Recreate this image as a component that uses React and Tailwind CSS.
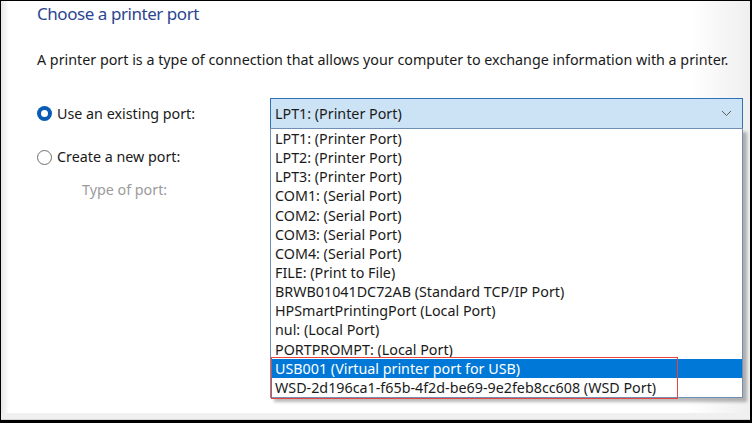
import React from "react";

const ports = [
  "LPT1: (Printer Port)",
  "LPT2: (Printer Port)",
  "LPT3: (Printer Port)",
  "COM1: (Serial Port)",
  "COM2: (Serial Port)",
  "COM3: (Serial Port)",
  "COM4: (Serial Port)",
  "FILE: (Print to File)",
  "BRWB01041DC72AB (Standard TCP/IP Port)",
  "HPSmartPrintingPort (Local Port)",
  "nul: (Local Port)",
  "PORTPROMPT: (Local Port)",
  "USB001 (Virtual printer port for USB)",
  "WSD-2d196ca1-f65b-4f2d-be69-9e2feb8cc608 (WSD Port)",
];

const font = { fontFamily: '"Noto Sans", "Open Sans", sans-serif' };

export default function App() {
  return (
    <div className="w-[752px] h-[423px] bg-black pt-px pl-px pr-[2px] pb-[3px]" style={font}>
      <div className="h-full flex flex-col bg-[linear-gradient(to_right,#e6e6e6,#ffffff_8px,#ffffff_calc(100%-60px),#efefef)]">
        <div className="flex-1 relative pl-[36px] text-[#1a1a1a]">
          <h1 className="pt-[1px] text-[17px] leading-[24px] tracking-[-0.45px] text-[#2d4591]">Choose a printer port</h1>
          <p className="mt-[24px] text-[14.3px] leading-[20px]">
            A printer port is a type of connection that allows your computer to exchange information with a printer.
          </p>

          <div className="mt-[28px] flex">
            <div className="w-[233px] text-[14.3px]">
              <label className="flex items-center gap-[5px] h-[31px]">
                <span className="w-[15px] h-[15px] rounded-full bg-[#0a5bb5] flex items-center justify-center">
                  <span className="w-[7px] h-[7px] rounded-full bg-white" />
                </span>
                Use an existing port:
              </label>
              <label className="flex items-center gap-[5px] h-[20px] mt-[18px]">
                <span className="w-[15px] h-[15px] rounded-full border border-[#6e6e6e] bg-white" />
                Create a new port:
              </label>
              <div className="pl-[45px] mt-[13px] text-[#9b9b9b] leading-[20px]">Type of port:</div>
            </div>

            <div className="w-[473px] relative text-[14.3px]">
              <div className="h-[31px] flex items-center justify-between pl-[4px] pr-[10px] bg-[#cce3f6] border border-[#2f72b8]">
                <span>LPT1: (Printer Port)</span>
                <svg width="11" height="7" viewBox="0 0 11 7" fill="none">
                  <path d="M1 1l4.5 4.5L10 1" stroke="#5a5a5a" strokeWidth="1" />
                </svg>
              </div>
              <div className="absolute left-0 top-[30px] w-[473px] bg-white border border-[#6f8fb5] shadow-[4px_4px_3px_rgba(0,0,0,0.28)]">
                {ports.map((p, i) => (
                  <div
                    key={p}
                    className={`h-[19.15px] leading-[19px] pl-[4px] whitespace-nowrap ${i === 12 ? "bg-[#0078d7] text-white" : ""}`}
                  >
                    {p}
                  </div>
                ))}
                <div className="absolute left-0 top-[228px] w-[407px] h-[42px] border-[1.5px] border-[#e8453c] pointer-events-none" />
              </div>
            </div>
          </div>
        </div>
        <div className="h-[7px] bg-[#f0f0f0] border-b border-[#d6d6d6]" />
      </div>
    </div>
  );
}
